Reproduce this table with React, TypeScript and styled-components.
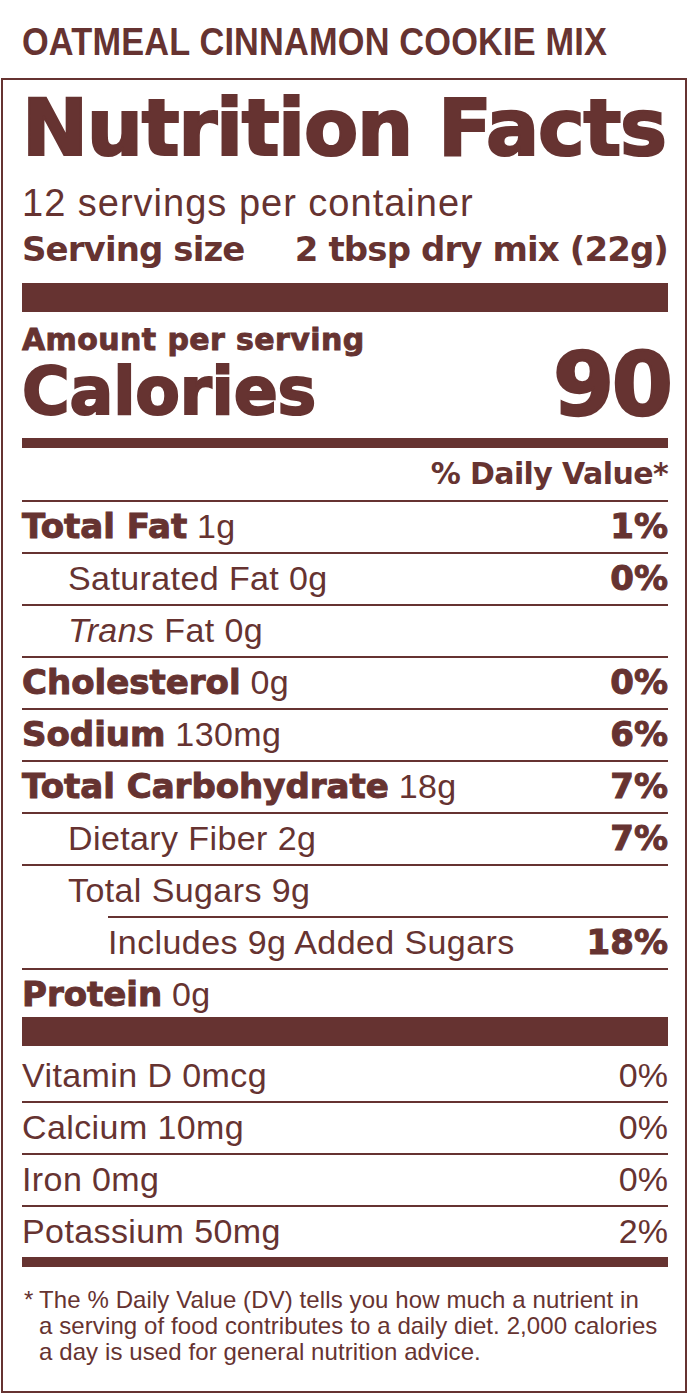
import React from 'react';
import styled, { createGlobalStyle } from 'styled-components';

const BROWN = '#663331';
const HEAVY = `"DejaVu Sans", "Liberation Sans", sans-serif`;
const REG = `"Liberation Sans", Arial, sans-serif`;

const Global = createGlobalStyle`
  html, body { margin: 0; padding: 0; background: #ffffff; }
  body {
    width: 688px;
    height: 1394px;
    overflow: hidden;
    color: ${BROWN};
    font-family: ${REG};
  }
`;

const Page = styled.div`
  width: 688px;
`;

const ProductName = styled.h1`
  margin: 0;
  padding: 5px 0 0 22px;
  height: 73px;
  line-height: 73px;
  font-family: ${REG};
  font-weight: 700;
  font-size: 39px;
  letter-spacing: 0.2px;
  white-space: nowrap;
  transform: scaleX(0.88);
  transform-origin: 22px 0;
`;

const Label = styled.section`
  margin: 0 1px;
  border: 2px solid ${BROWN};
  padding: 0 17px 26px 19px;
`;

const Heading = styled.h2`
  margin: 0;
  padding-top: 2px;
  font-family: ${HEAVY};
  font-weight: 700;
  font-size: 79px;
  line-height: 92px;
  letter-spacing: -1.3px;
  -webkit-text-stroke: 2.2px ${BROWN};
  white-space: nowrap;
`;

const Servings = styled.div`
  font-family: ${REG};
  font-size: 38px;
  line-height: 58px;
  letter-spacing: 1px;
  white-space: nowrap;
`;

const ServingSize = styled.div`
  display: flex;
  justify-content: space-between;
  font-family: ${HEAVY};
  font-weight: 700;
  font-size: 34px;
  line-height: 34px;
  letter-spacing: -0.9px;
  white-space: nowrap;
`;

const Bar = styled.div<{ $h: number; $mt?: number }>`
  height: ${(p) => p.$h}px;
  margin-top: ${(p) => p.$mt ?? 0}px;
  background: ${BROWN};
`;

const CaloriesBlock = styled.div`
  display: flex;
  justify-content: space-between;
  padding-bottom: 9px;
`;

const CaloriesLeft = styled.div`
  display: flex;
  flex-direction: column;
`;

const AmountLabel = styled.div`
  padding-top: 14px;
  font-family: ${HEAVY};
  font-weight: 700;
  font-size: 30px;
  line-height: 28px;
  letter-spacing: 0.4px;
  -webkit-text-stroke: 0.9px ${BROWN};
  white-space: nowrap;
`;

const CaloriesLabel = styled.div`
  font-family: ${HEAVY};
  font-weight: 700;
  font-size: 65px;
  line-height: 75px;
  letter-spacing: -0.2px;
  -webkit-text-stroke: 2px ${BROWN};
  white-space: nowrap;
`;

const CaloriesValue = styled.div`
  align-self: flex-end;
  margin-right: -2.5px;
  font-family: ${HEAVY};
  font-weight: 700;
  font-size: 88px;
  line-height: 88px;
  letter-spacing: -2.5px;
  -webkit-text-stroke: 2.4px ${BROWN};
`;

const DVHeader = styled.div`
  height: 52px;
  text-align: right;
  font-family: ${HEAVY};
  font-weight: 700;
  font-size: 30px;
  line-height: 52px;
  letter-spacing: -0.6px;
  white-space: nowrap;
`;

const Row = styled.div<{
  $textIndent?: number;
  $lineIndent?: number;
  $noLine?: boolean;
  $h?: number;
  $pb?: number;
}>`
  box-sizing: border-box;
  display: flex;
  justify-content: space-between;
  align-items: center;
  height: ${(p) => p.$h ?? 52}px;
  margin-left: ${(p) => p.$lineIndent ?? 0}px;
  padding-left: ${(p) => p.$textIndent ?? 0}px;
  padding-bottom: ${(p) => p.$pb ?? 2}px;
  border-top: ${(p) => (p.$noLine ? 'none' : `2px solid ${BROWN}`)};
  line-height: 46px;
  white-space: nowrap;
`;

const Name = styled.span`
  font-family: ${REG};
  font-size: 34px;
  letter-spacing: 0.4px;
`;

const Strong = styled.b`
  font-family: ${HEAVY};
  font-weight: 700;
  letter-spacing: 0px;
  -webkit-text-stroke: 1px ${BROWN};
`;

const Em = styled.i`
  font-style: italic;
`;

const Percent = styled.span<{ $bold?: boolean }>`
  font-family: ${(p) => (p.$bold ? HEAVY : REG)};
  font-weight: ${(p) => (p.$bold ? 700 : 400)};
  font-size: 34px;
  -webkit-text-stroke: ${(p) => (p.$bold ? `1px ${BROWN}` : '0')};
`;

const MicroList = styled.div`
  padding-top: 5px;
`;

const Footnote = styled.div`
  display: flex;
  padding-top: 20px;
  font-family: ${REG};
  font-size: 24px;
  line-height: 26px;
  letter-spacing: 0.1px;
  white-space: nowrap;
`;

const Star = styled.span`
  flex: 0 0 17px;
  padding-left: 2px;
  box-sizing: border-box;
`;

const FootLines = styled.div`
  display: flex;
  flex-direction: column;
`;

type Nutrient = {
  bold?: string;
  name?: React.ReactNode;
  pct?: string;
  textIndent?: number;
  lineIndent?: number;
};

const nutrients: Nutrient[] = [
  { bold: 'Total Fat', name: '1g', pct: '1%' },
  { name: 'Saturated Fat 0g', pct: '0%', textIndent: 46 },
  { name: <><Em>Trans</Em> Fat 0g</>, textIndent: 46 },
  { bold: 'Cholesterol', name: '0g', pct: '0%' },
  { bold: 'Sodium', name: '130mg', pct: '6%' },
  { bold: 'Total Carbohydrate', name: '18g', pct: '7%' },
  { name: 'Dietary Fiber 2g', pct: '7%', textIndent: 46 },
  { name: 'Total Sugars 9g', textIndent: 46 },
  { name: 'Includes 9g Added Sugars', pct: '18%', lineIndent: 86 },
];

const micros = [
  { name: 'Vitamin D 0mcg', pct: '0%' },
  { name: 'Calcium 10mg', pct: '0%' },
  { name: 'Iron 0mg', pct: '0%' },
  { name: 'Potassium 50mg', pct: '2%' },
];

export default function App() {
  return (
    <Page>
      <Global />
      <ProductName>OATMEAL CINNAMON COOKIE MIX</ProductName>
      <Label>
        <Heading>Nutrition Facts</Heading>
        <Servings>12 servings per container</Servings>
        <ServingSize>
          <span>Serving size</span>
          <span>2 tbsp dry mix (22g)</span>
        </ServingSize>
        <Bar $h={29} $mt={17} />
        <CaloriesBlock>
          <CaloriesLeft>
            <AmountLabel>Amount per serving</AmountLabel>
            <CaloriesLabel>Calories</CaloriesLabel>
          </CaloriesLeft>
          <CaloriesValue>90</CaloriesValue>
        </CaloriesBlock>
        <Bar $h={10} />
        <DVHeader>% Daily Value*</DVHeader>
        {nutrients.map((n, i) => (
          <Row key={i} $textIndent={n.textIndent} $lineIndent={n.lineIndent}>
            <Name>
              {n.bold && <Strong>{n.bold}</Strong>}
              {n.bold && ' '}
              {n.name}
            </Name>
            {n.pct && <Percent $bold>{n.pct}</Percent>}
          </Row>
        ))}
        <Row $h={49} $pb={0}>
          <Name>
            <Strong>Protein</Strong> 0g
          </Name>
        </Row>
        <Bar $h={29} />
        <MicroList>
          {micros.map((m, i) => (
            <Row key={m.name} $noLine={i === 0} $h={i === 0 ? 50 : 52}>
              <Name>{m.name}</Name>
              <Percent>{m.pct}</Percent>
            </Row>
          ))}
        </MicroList>
        <Bar $h={10} />
        <Footnote>
          <Star>*</Star>
          <FootLines>
            <span>The % Daily Value (DV) tells you how much a nutrient in</span>
            <span>a serving of food contributes to a daily diet. 2,000 calories</span>
            <span>a day is used for general nutrition advice.</span>
          </FootLines>
        </Footnote>
      </Label>
    </Page>
  );
}
